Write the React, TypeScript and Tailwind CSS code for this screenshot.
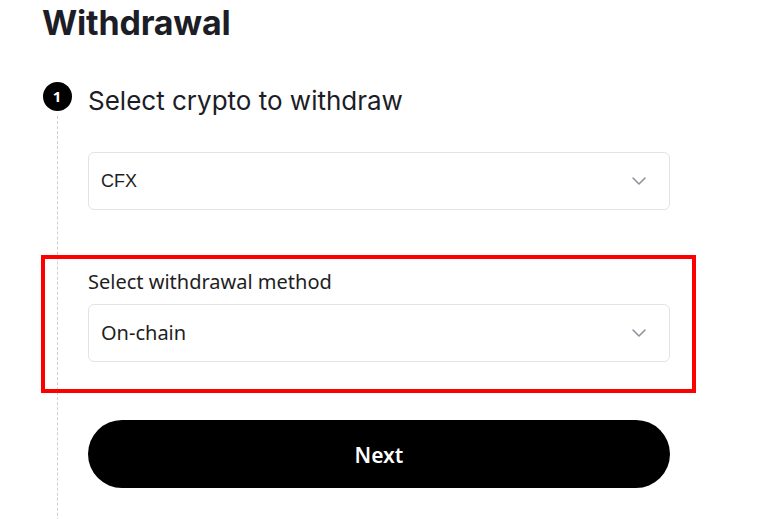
import React from "react";

function Chevron() {
  return (
    <svg width="16" height="10" viewBox="0 0 16 10" fill="none">
      <path d="M2 2l6 6 6-6" stroke="#8a8f99" strokeWidth="1.5" strokeLinecap="round" strokeLinejoin="round" />
    </svg>
  );
}

function Select({ value, font }: { value: string; font: string }) {
  return (
    <div className="flex h-[58px] w-full items-center justify-between rounded-[6px] border border-[#e3e3e3] bg-white pl-[12px] pr-[22px]">
      <span className={`text-[#1e1e1e] ${font}`}>{value}</span>
      <Chevron />
    </div>
  );
}

export default function App() {
  return (
    <div className="relative h-[519px] w-[776px] overflow-hidden bg-white font-['Noto_Sans',sans-serif]">
      <div className="pl-[42px] pt-[1px]">
        <h1 className="font-['Inter',sans-serif] text-[34px] font-bold leading-[44px] tracking-[-0.2px] text-[#1c1d26]">
          Withdrawal
        </h1>
        <div className="mt-[37px] flex">
          <div className="flex w-[30px] flex-col items-center">
            <div className="flex h-[29px] w-[29px] items-center justify-center rounded-full bg-black text-[15px] font-bold text-white">
              1
            </div>
            <div className="mt-[5px] h-[460px] border-l border-dashed border-[#cfcfcf]" />
          </div>
          <div className="ml-[16px] w-[582px]">
            <div className="pt-[5px] font-['Inter',sans-serif] text-[26px] leading-[28px] text-[#1c1d26]">
              Select crypto to withdraw
            </div>
            <div className="mt-[37px]">
              <Select value="CFX" font="text-[18px] font-['Liberation_Sans',sans-serif]" />
            </div>
            <div className="mt-[60px] text-[20px] leading-[24px] text-[#1e1e1e]">
              Select withdrawal method
            </div>
            <div className="mt-[10px]">
              <Select value="On-chain" font="text-[20px] font-['Noto_Sans',sans-serif]" />
            </div>
            <button className="mt-[58px] flex h-[68px] w-full items-center justify-center rounded-full bg-black pt-[3px] text-[21px] font-semibold text-white">
              Next
            </button>
          </div>
        </div>
      </div>
      <div className="pointer-events-none absolute left-[41px] top-[255px] h-[138px] w-[655px] border-[4px] border-[#ff0000]" />
    </div>
  );
}
